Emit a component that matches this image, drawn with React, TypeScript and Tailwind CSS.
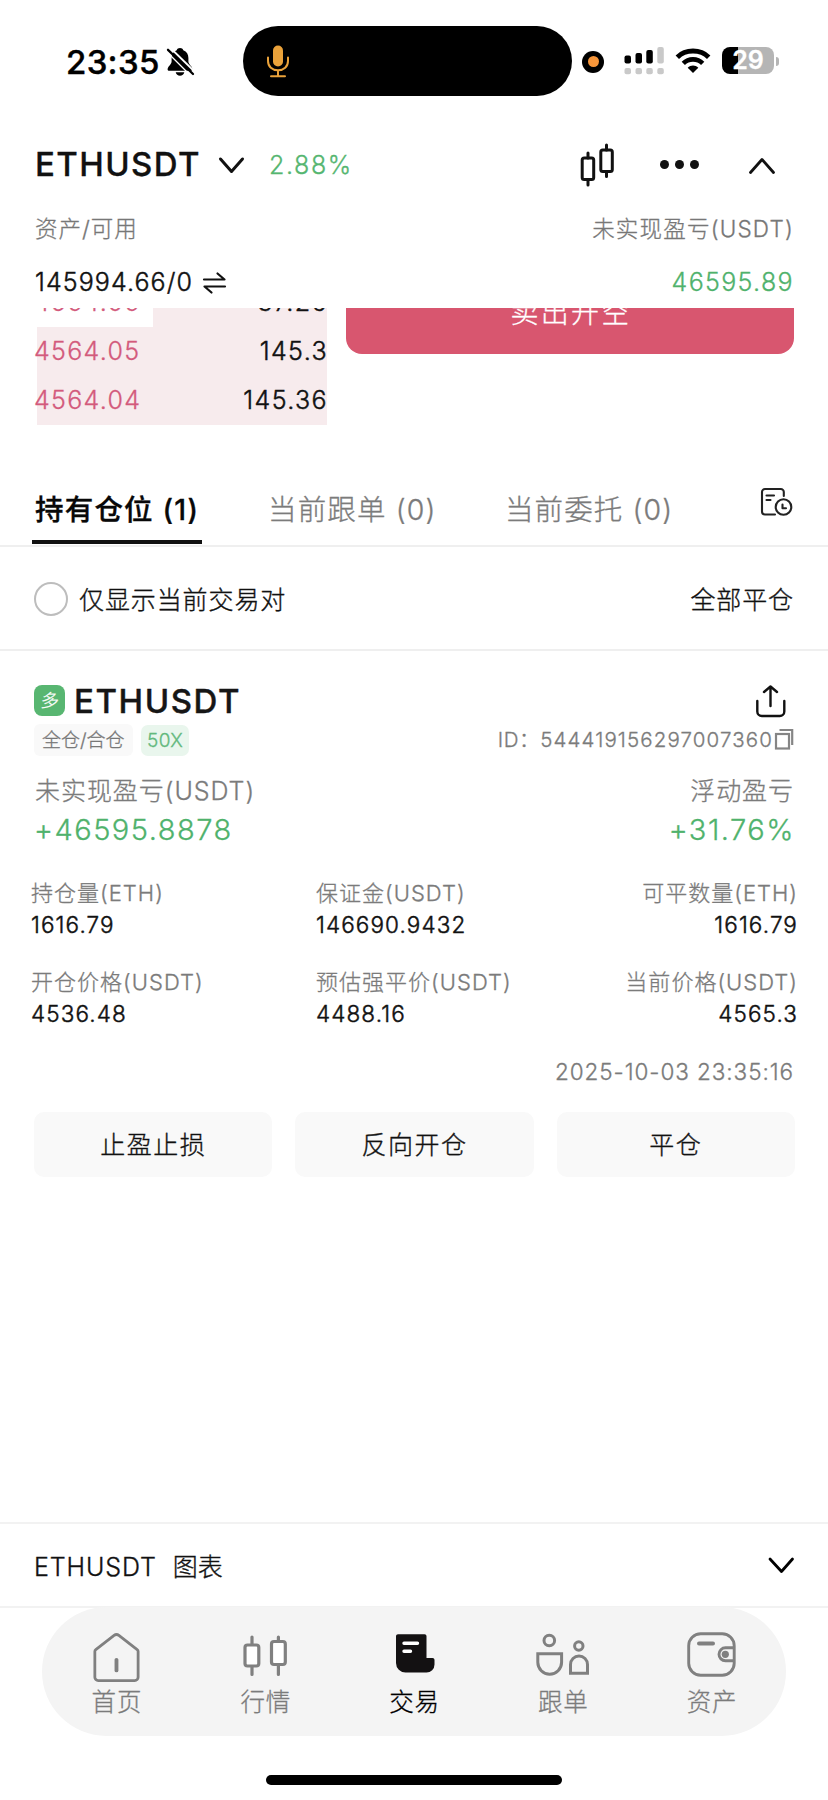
import React from "react";

const FONT = "font-['Inter','Noto_Sans_CJK_SC',sans-serif]";

function BellOff() {
  return (
    <svg width="30" height="30" viewBox="0 0 30 30" fill="none">
      <path
        fill="#000"
        d="M14 1c-1.600 0-2.900.8-3.300 2.200C7.200 4.500 5.600 7.500 5.600 11v3.500c0 3-4 5-4 7.700 0 1 .7 1.500 1.700 1.500h21.400c1 0 1.700-.5 1.700-1.500 0-2.700-4-4.700-4-7.700V11c0-3.500-1.600-6.500-5.100-7.800C16.900 1.800 15.600 1 14 1z"
      />
      <path fill="#000" d="M9.700 25.300h8.600c-.5 2-2.100 3.400-4.300 3.400s-3.800-1.400-4.300-3.400z" />
      <path d="M4 0.500 29 25" stroke="#fff" strokeWidth="1.800" />
      <path d="M0.500 4.500 25 29" stroke="#fff" strokeWidth="1.200" />
      <path d="M2 2.800 27 27" stroke="#000" strokeWidth="2.300" strokeLinecap="round" />
    </svg>
  );
}

function Mic() {
  return (
    <svg width="24" height="34" viewBox="0 0 24 34" fill="none" stroke="#eaa23a" strokeWidth="2" strokeLinecap="round">
      <rect x="7" y="1.500" width="10" height="21" rx="5" fill="#eaa23a" stroke="none" />
      <path d="M2 13.500v3.500c0 5.500 4.200 9.300 10 9.300s10-3.800 10-9.300v-3.500M12 26.500V32M5 32.300h14" />
    </svg>
  );
}

function Signal() {
  return (
    <svg width="41" height="28" viewBox="0 0 41 28">
      <g fill="#000">
        <rect x="0.500" y="8.500" width="6.500" height="8" rx="2" />
        <rect x="11.500" y="6" width="6.500" height="10.500" rx="2" />
        <rect x="22.300" y="3" width="6.500" height="13.500" rx="2" />
      </g>
      <g fill="#c9c9c9">
        <rect x="33.300" y="0" width="6.500" height="16.500" rx="2" />
        <rect x="0.500" y="21" width="6.500" height="6.300" rx="2" />
        <rect x="11.500" y="21" width="6.500" height="6.300" rx="2" />
        <rect x="22.300" y="21" width="6.500" height="6.300" rx="2" />
        <rect x="33.300" y="21" width="6.500" height="6.300" rx="2" />
      </g>
    </svg>
  );
}

function Wifi() {
  return (
    <svg width="36" height="26" viewBox="0 0 36 26" fill="none" stroke="#000">
      <path d="M2.300 9.200C6.500 5 12 3 18 3s11.500 2 15.700 6.200" strokeWidth="4.800" />
      <path d="M8.300 15.400c2.700-2.700 6-4 9.700-4s7 1.300 9.700 4" strokeWidth="4.600" />
      <path d="M12.700 19.700c1.500-1.400 3.300-2.200 5.300-2.200s3.800.8 5.300 2.200L18 25z" fill="#000" stroke="none" />
    </svg>
  );
}

function StatusBar() {
  return (
    <div className="flex h-[123px] shrink-0 items-center pl-[66px]">
      <span className="w-[100px] text-[33px] leading-[40px] font-medium tracking-[0.300px] text-black [-webkit-text-stroke:0.400px]">23:35</span>
      <BellOff />
      <div className="mb-[1px] ml-[47px] flex h-[70px] w-[329px] items-center rounded-full bg-black pl-[23px]">
        <Mic />
      </div>
      <div className="ml-[10px] flex h-[22px] w-[22px] items-center justify-center rounded-full bg-black">
        <div className="h-[11px] w-[11px] rounded-full bg-[#f7963a]" />
      </div>
      <div className="ml-[20px] mb-[1px]">
        <Signal />
      </div>
      <div className="ml-[10px] mb-[2px]">
        <Wifi />
      </div>
      <div className="mb-[2px] ml-[11px] flex h-[27px] w-[52px] items-center justify-center rounded-[8px] bg-[linear-gradient(90deg,#000_16px,#b5b5b5_16px)]">
        <span className="text-[25px] leading-[27px] font-semibold text-white">29</span>
      </div>
      <div className="ml-[2px] h-[9px] w-[3px] rounded-r-full bg-[#b5b5b5]" />
    </div>
  );
}

function Header() {
  return (
    <div className="flex h-[82px] shrink-0 items-center pl-[35px]">
      <span className="w-[183px] pt-[1px] text-[33px] font-medium tracking-[1.400px] text-[#111] [-webkit-text-stroke:0.300px]">ETHUSDT</span>
      <svg className="mt-[1px]" width="28" height="18" viewBox="0 0 28 18" fill="none" stroke="#111" strokeWidth="3" strokeLinecap="round" strokeLinejoin="round">
        <path d="M2.500 3 13.500 15.500 24.500 3" />
      </svg>
      <span className="ml-[23px] w-[309px] pt-[3px] text-[25px] tracking-[1.600px] text-[#55b670]">2.88%</span>
      <svg className="shrink-0" width="38" height="48" viewBox="0 0 38 48" fill="none" stroke="#111" strokeWidth="3" strokeLinecap="round">
        <rect x="4.200" y="18" width="11.500" height="21.500" rx="2" />
        <path d="M10 13v5M10 40v5" />
        <rect x="22.800" y="10" width="11.500" height="21.500" rx="2" />
        <path d="M28.500 5v5M28.500 32v4.500" />
      </svg>
      <svg className="ml-[43px]" width="42" height="12" viewBox="0 0 42 12" fill="#111">
        <circle cx="5.500" cy="6.500" r="4.500" />
        <circle cx="20.500" cy="6.500" r="4.500" />
        <circle cx="35.500" cy="6.500" r="4.500" />
      </svg>
      <svg className="mt-[3px] ml-[47px]" width="28" height="18" viewBox="0 0 28 18" fill="none" stroke="#111" strokeWidth="2.800" strokeLinecap="round" strokeLinejoin="round">
        <path d="M2.500 15.500 14 2.500 25.500 15.500" />
      </svg>
    </div>
  );
}

function Balance() {
  return (
    <>
      <div className="mt-[3px] flex h-[42px] shrink-0 items-center justify-between pr-[34px] pl-[35px] text-[22.5px] text-[#777]">
        <span className="tracking-[1px]">资产/可用</span>
        <span className="tracking-[1.200px]">未实现盈亏(USDT)</span>
      </div>
      <div className="flex h-[58px] shrink-0 items-center justify-between pt-[7px] pr-[34px] pl-[35px] text-[25px]">
        <span className="flex items-center gap-[9px] tracking-[1.100px] text-[#111] [-webkit-text-stroke:0.450px]">
          145994.66/0
          <svg width="26" height="24" viewBox="0 0 26 24" fill="none" stroke="#111" strokeWidth="2.200" strokeLinecap="round" strokeLinejoin="round">
            <path d="M2 8.500h20.500L15.500 2.500M23 15.500H2.500L9.500 21.500" />
          </svg>
        </span>
        <span className="tracking-[1.350px] text-[#4fb26c]">46595.89</span>
      </div>
    </>
  );
}

const asks = [
  { price: "4564.06", size: "37.26", depth: "w-[174px]" },
  { price: "4564.05", size: "145.3", depth: "w-[290px]" },
  { price: "4564.04", size: "145.36", depth: "w-[290px]" },
];

function OrderPanel() {
  return (
    <div className="flex h-[157px] shrink-0 items-start overflow-hidden pl-[37px]">
      <div className="-mt-[30px] w-[290px]">
        {asks.map((a) => (
          <div key={a.price} className="relative flex h-[49px] items-center justify-between text-[25px]">
            <div className={`absolute inset-y-0 right-0 bg-[#f7ebed] ${a.depth}`} />
            <span className="relative -ml-[3px] tracking-[1.300px] text-[#d35a7c]">{a.price}</span>
            <span className="relative -mr-[1px] tracking-[1.400px] text-[#111] [-webkit-text-stroke:0.450px]">{a.size}</span>
          </div>
        ))}
      </div>
      <div className="-mt-[37px] ml-[19px] flex h-[83px] w-[448px] items-center justify-center rounded-[16px] bg-[#d8566f] pl-[2px] text-[28px] tracking-[2.200px] text-white">
        卖出开空
      </div>
    </div>
  );
}

function Tabs() {
  return (
    <div className="flex h-[82px] shrink-0 items-end border-b-2 border-[#efefef] pl-[32px] text-[28.5px] leading-[40px]">
      <div className="w-[170px] pb-[1px]">
        <div className="pl-[3px] font-medium tracking-[1.200px] whitespace-nowrap text-[#080808]">持有仓位 (1)</div>
        <div className="mt-[10px] h-[4px] bg-[#111]" />
      </div>
      <div className="ml-[66px] w-[237px] pb-[15px] tracking-[1.150px] text-[#7b7b7b]">当前跟单 (0)</div>
      <div className="w-[255px] pb-[15px] tracking-[1.100px] text-[#7b7b7b]">当前委托 (0)</div>
      <svg className="mb-[26px]" width="34" height="32" viewBox="0 0 34 32" fill="none" stroke="#222" strokeWidth="2.100" strokeLinecap="round" strokeLinejoin="round">
        <path d="M23.800 9V5a3 3 0 0 0-3-3H5a3 3 0 0 0-3 3V24.500a3 3 0 0 0 3 3h10" />
        <path d="M6.500 8.500h7.500M6.500 13h4" />
        <circle cx="23.500" cy="20" r="7.800" />
        <path d="M22.500 17.500v3.800h3.500" />
      </svg>
    </div>
  );
}

function FilterRow() {
  return (
    <div className="flex h-[104px] shrink-0 items-center border-b-2 border-[#efefef] pr-[34px] pl-[34px] text-[#111] [-webkit-text-stroke:0.350px]">
      <div className="mt-[2px] h-[34px] w-[34px] rounded-full border-[2.500px] border-[#bdbdbd]" />
      <span className="mt-[6px] ml-[11px] grow text-[25px] tracking-[0.900px]">仅显示当前交易对</span>
      <span className="mt-[6px] text-[25px] tracking-[0.900px]">全部平仓</span>
    </div>
  );
}

const stats = [
  { label: "持仓量(ETH)", value: "1616.79", cls: "" },
  { label: "保证金(USDT)", value: "146690.9432", cls: "" },
  { label: "可平数量(ETH)", value: "1616.79", cls: "text-right" },
  { label: "开仓价格(USDT)", value: "4536.48", cls: "" },
  { label: "预估强平价(USDT)", value: "4488.16", cls: "" },
  { label: "当前价格(USDT)", value: "4565.3", cls: "text-right" },
];

function Position() {
  return (
    <div className="shrink-0 pt-[28px]">
      <div className="flex h-[43px] items-center pl-[34px]">
        <div className="flex h-[31px] w-[31px] items-center justify-center rounded-[8px] bg-[#58b671] text-[18px] leading-[31px] text-white">
          <span className="skew-x-[-6deg]">多</span>
        </div>
        <span className="ml-[9px] w-[680px] pt-[2px] text-[33px] font-medium tracking-[1.550px] text-[#161616] [-webkit-text-stroke:0.400px]">ETHUSDT</span>
        <svg width="33" height="34" viewBox="0 0 33 34" fill="none" stroke="#111" strokeWidth="2.400" strokeLinecap="round" strokeLinejoin="round">
          <path d="M3.300 17v10.500a4.500 4.500 0 0 0 4.500 4.500h18a4.500 4.500 0 0 0 4.500-4.500V17M16.500 22V3M10 8l6.500-5.500L23 8" />
        </svg>
      </div>
      <div className="flex h-[36px] items-center pr-[34px] pl-[34px]">
        <span className="h-[32px] w-[99px] rounded-[6px] bg-[#f9f9f9] pl-[8px] text-[19px] leading-[34px] text-[#777]">全仓/合仓</span>
        <span className="ml-[8px] h-[31px] w-[48px] rounded-[7px] bg-[#e9f6ed] pl-[6px] text-[19px] leading-[32px] tracking-[0.400px] text-[#63b97d]">50X</span>
        <span className="ml-auto text-[20.5px] tracking-[1.120px] text-[#7b7b7b]">
          <span className="tracking-[0.600px]">ID：</span>544419156297007360
        </span>
        <svg width="21" height="24" viewBox="0 0 21 24" fill="none" stroke="#858585" strokeWidth="2.200">
          <rect x="3" y="6" width="13" height="14.500" />
          <path d="M6.500 2h12.700v15" />
        </svg>
      </div>
      <div className="mt-[12px] flex h-[41px] items-center justify-between pt-[2px] pr-[34px] pl-[35px] text-[25px] tracking-[0.950px] text-[#7b7b7b]">
        <span>未实现盈亏(USDT)</span>
        <span>浮动盈亏</span>
      </div>
      <div className="flex h-[37px] items-center justify-between pr-[33px] pl-[34px] text-[29px] tracking-[1.500px] text-[#4fb26c]">
        <span>+46595.8878</span>
        <span>+31.76%</span>
      </div>
      <div className="mt-[28px] grid grid-cols-[285px_260px_222px] gap-y-[24px] pl-[31px]">
        {stats.map((s) => (
          <div key={s.label} className={s.cls}>
            <div className="pt-[1px] text-[22px] leading-[32px] tracking-[1.020px] text-[#7b7b7b]">{s.label}</div>
            <div className="text-[22.5px] leading-[32px] tracking-[1.100px] text-[#111] [-webkit-text-stroke:0.450px]">{s.value}</div>
          </div>
        ))}
      </div>
      <div className="mt-[22px] pr-[34px] text-right text-[22.5px] leading-[40px] tracking-[0.930px] text-[#7b7b7b]">
        2025-10-03 23:35:16
      </div>
      <div className="mt-[20px] grid grid-cols-3 gap-[23px] pr-[33px] pl-[34px] text-[25px] tracking-[1.500px] text-[#111] [-webkit-text-stroke:0.350px]">
        {["止盈止损", "反向开仓", "平仓"].map((t) => (
          <button key={t} className="h-[65px] rounded-[10px] bg-[#f9f9f9] pt-[2px]">{t}</button>
        ))}
      </div>
    </div>
  );
}

function ChartBar() {
  return (
    <div className="mt-auto flex h-[86px] shrink-0 items-center border-y-2 border-[#f2f2f2] pr-[33px] pl-[34px] text-[25px] text-[#111] [-webkit-text-stroke:0.350px]">
      <span className="pt-[5px] tracking-[0.900px]">ETHUSDT</span>
      <span className="ml-[16px] grow pt-[6px]">图表</span>
      <svg width="28" height="18" viewBox="0 0 28 18" fill="none" stroke="#000" strokeWidth="2.800" strokeLinecap="round" strokeLinejoin="round">
        <path d="M3 3 14.500 15.500 25.500 3" />
      </svg>
    </div>
  );
}

function HomeIcon() {
  return (
    <svg width="50" height="52" viewBox="-1.200 -2 52 54" fill="none" stroke="#808080" strokeWidth="2.900" strokeLinecap="round" strokeLinejoin="round">
      <path d="M22.800 3.600 3.800 18.300a2.500 2.500 0 0 0-1 2V47a3.500 3.500 0 0 0 3.500 3.500h38A3.500 3.500 0 0 0 47.800 47V20.300a2.500 2.500 0 0 0-1-2L27.800 3.600a4 4 0 0 0-5 0z" />
      <path d="M25.300 29v11" strokeWidth="4" />
    </svg>
  );
}

function MarketIcon() {
  return (
    <svg width="50" height="52" viewBox="0 0 50 52" fill="none" stroke="#808080" strokeWidth="3.200" strokeLinecap="round">
      <rect x="5" y="15" width="13.800" height="21" rx="2.500" fill="#fff" />
      <path d="M12 7V14M12 37v7.500" />
      <rect x="31.500" y="11.500" width="13.800" height="23" rx="2.500" fill="#fff" />
      <path d="M38.400 7V11M38.400 35.500V44.500" />
    </svg>
  );
}

function TradeIcon() {
  return (
    <svg width="50" height="52" viewBox="0 0 50 52" fill="none">
      <path
        fill="#131112"
        d="M7 6.200c0-1.200.9-2 2-2H35.500c1.200 0 2 .8 2 2V28h6c1.200 0 2 .9 2 2v4.500a8 8 0 0 1-8 8H16.500a9.500 9.500 0 0 1-9.500-9.500z"
      />
      <path d="M15 13.300H28.500M15 21.300H21.500" stroke="#fff" strokeWidth="3.400" strokeLinecap="round" />
    </svg>
  );
}

function FollowIcon() {
  return (
    <svg width="58" height="52" viewBox="1.500 0 58 52" fill="none" stroke="#808080" strokeWidth="3">
      <circle cx="16.800" cy="10.500" r="5.300" />
      <path d="M5.300 23.800h23.800v8.500a11.900 11.900 0 0 1-23.800 0z" />
      <circle cx="46.300" cy="16" r="4.200" />
      <path d="M38 43.200V34.500a8.500 8.500 0 0 1 17 0v8.700z" />
    </svg>
  );
}

function AssetsIcon() {
  return (
    <svg width="50" height="52" viewBox="0.500 0 50 52" fill="none" stroke="#808080" strokeWidth="2.900">
      <rect x="2.200" y="3.800" width="45.500" height="41.500" rx="12" />
      <path d="M12.500 13.500h14" strokeWidth="4" strokeLinecap="round" />
      <path d="M47.500 17.800H39a6.500 6.500 0 0 0-6.500 6.500v0a6.500 6.500 0 0 0 6.500 6.500h8.500" />
      <circle cx="38.800" cy="24.300" r="3.600" fill="#808080" stroke="none" />
    </svg>
  );
}

const nav = [
  { label: "首页", Icon: HomeIcon, color: "text-[#7b7b7b]" },
  { label: "行情", Icon: MarketIcon, color: "text-[#7b7b7b]" },
  { label: "交易", Icon: TradeIcon, color: "text-black" },
  { label: "跟单", Icon: FollowIcon, color: "text-[#7b7b7b]" },
  { label: "资产", Icon: AssetsIcon, color: "text-[#7b7b7b]" },
];

function NavBar() {
  return (
    <div className="flex h-[192px] shrink-0 flex-col items-center">
      <nav className="-mt-[1px] grid h-[129px] w-[744px] grid-cols-5 rounded-full bg-[#f4f4f4]">
        {nav.map(({ label, Icon, color }) => (
          <div key={label} className="flex flex-col items-center pt-[23px]">
            <Icon />
            <span className={`pl-[1px] text-[24.5px] leading-[40px] tracking-[0.800px] ${color}`}>{label}</span>
          </div>
        ))}
      </nav>
      <div className="mt-[39px] h-[10px] w-[296px] rounded-full bg-black" />
    </div>
  );
}

export default function App() {
  return (
    <div
      className={`flex h-[1800px] w-[828px] flex-col overflow-hidden bg-white font-light [-webkit-text-stroke:0.300px] ${FONT}`}
    >
      <StatusBar />
      <Header />
      <Balance />
      <OrderPanel />
      <Tabs />
      <FilterRow />
      <Position />
      <ChartBar />
      <NavBar />
    </div>
  );
}
